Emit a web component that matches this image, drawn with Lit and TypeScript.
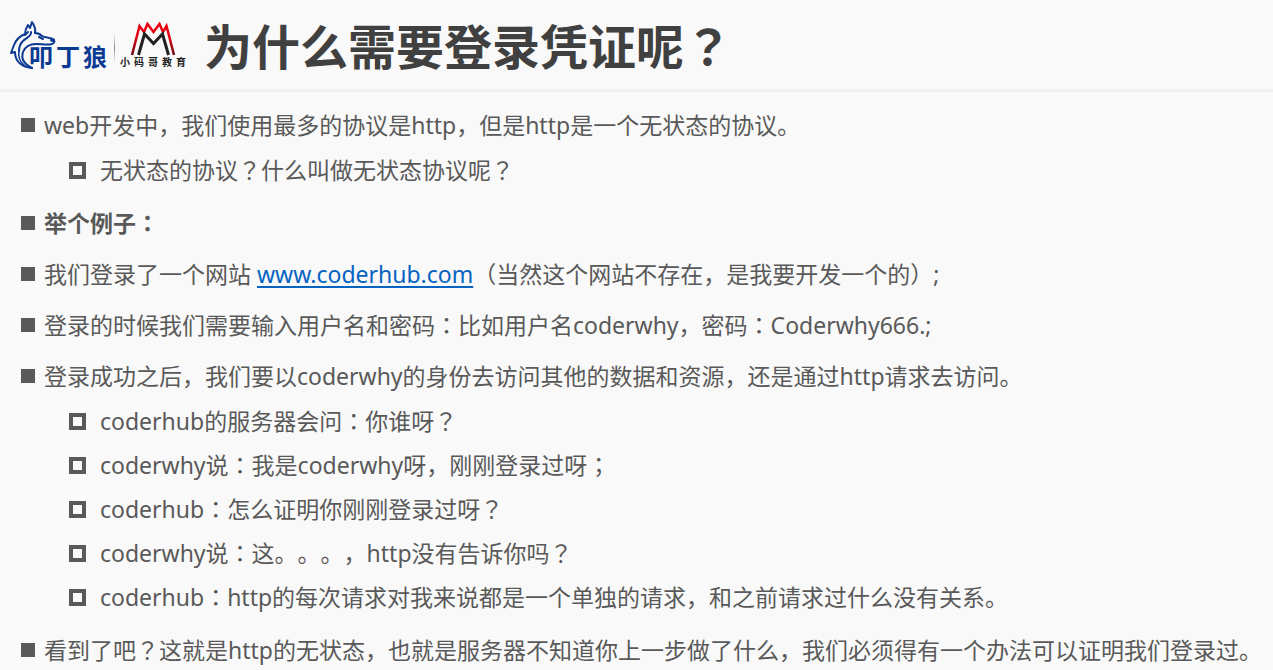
import { LitElement, html, css, svg, nothing, type TemplateResult } from "lit";
import { customElement } from "lit/decorators.js";

interface Point {
  text: string;
  link?: { label: string; href: string; rest: string };
  strong?: boolean;
  children?: string[];
}

const POINTS: Point[] = [
  {
    text: "web开发中，我们使用最多的协议是http，但是http是一个无状态的协议。",
    children: ["无状态的协议？什么叫做无状态协议呢？"],
  },
  { text: "举个例子：", strong: true },
  {
    text: "我们登录了一个网站 ",
    link: {
      label: "www.coderhub.com",
      href: "http://www.coderhub.com",
      rest: "（当然这个网站不存在，是我要开发一个的）;",
    },
  },
  { text: "登录的时候我们需要输入用户名和密码：比如用户名coderwhy，密码：Coderwhy666.;" },
  {
    text: "登录成功之后，我们要以coderwhy的身份去访问其他的数据和资源，还是通过http请求去访问。",
    children: [
      "coderhub的服务器会问：你谁呀？",
      "coderwhy说：我是coderwhy呀，刚刚登录过呀；",
      "coderhub：怎么证明你刚刚登录过呀？",
      "coderwhy说：这。。。，http没有告诉你吗？",
      "coderhub：http的每次请求对我来说都是一个单独的请求，和之前请求过什么没有关系。",
    ],
  },
  {
    text: "看到了吧？这就是http的无状态，也就是服务器不知道你上一步做了什么，我们必须得有一个办法可以证明我们登录过。",
  },
];

// Sets colons, semicolons and question marks in the middle of their square.
const centred = (text: string): (string | TemplateResult)[] =>
  text
    .split(/([：？；])/)
    .filter((part) => part !== "")
    .map((part) => (/^[：？；]$/.test(part) ? html`<span class="mark" lang="zh-TW">${part}</span>` : part));

@customElement("brand-logos")
class BrandLogos extends LitElement {
  static styles = css`
    :host {
      display: block;
      flex: none;
    }
    .logos {
      display: block;
      font-family: "Noto Sans CJK SC", sans-serif;
      font-weight: 700;
    }
    .wolf {
      fill: none;
      stroke: #0b3a92;
      stroke-width: 2;
      stroke-linejoin: round;
      stroke-linecap: round;
    }
    .wolf-name {
      font-size: 24px;
      fill: #0b3a92;
    }
    .school-name {
      font-size: 10px;
      fill: #222;
    }
  `;

  render() {
    return html`<svg class="logos" width="180" height="54" viewBox="8 18 180 54" role="img" aria-label="叩丁狼 小码哥教育">
      <defs>
        <linearGradient id="rule" x1="0" y1="0" x2="0" y2="1">
          <stop offset="0" stop-color="#aaa" stop-opacity="0" />
          <stop offset=".5" stop-color="#888" />
          <stop offset="1" stop-color="#aaa" stop-opacity="0" />
        </linearGradient>
        <linearGradient id="red" x1="0" y1="0" x2="0" y2="1">
          <stop offset=".4" stop-color="#e60012" />
          <stop offset="1" stop-color="#6a0c10" />
        </linearGradient>
      </defs>
      ${svg`
        <g class="wolf">
          <path d="M35 33C36 29 34 25 32 22L30 28 28 25C26 28 25 31 25 34C20 36 16 40 14 45L11 53 15 52C15 60 20 67 32 68" />
          <path d="M32 68C24 64 21 58 23 52C25 47 30 44 36 44C41 44 45 45 50 44.500C54 44 55 42 54 39.500C50 37 45 38 42 36C40 34 38 33 35 33" />
          <path d="M31 32C32 36 26 38 23 41C20 44 19 48 19 51M39 37 43 39M25 35 28 32" />
          <path d="M19 51C18 56 20 62 25 66" stroke-width="1.500" />
          <path d="M51 39 54 40 54 42 51 41Z" fill="#0b3a92" stroke-width="1" />
        </g>
        <text class="wolf-name" x="29 56 83" y="66">叩丁狼</text>
        <rect x="114" y="32" width="1" height="32" fill="url(#rule)" />
        <path d="M132 55 139.500 26 144 32 147.500 24 153.500 32 159.500 24 163 32 166.500 26 174 55" fill="none" stroke="url(#red)" stroke-width="2.500" />
        <path d="M138.500 55 144.500 34 153.500 43.500 162.500 34 168.500 55" fill="none" stroke="#222" stroke-width="3" />
        <text class="school-name" x="120 134 148 162 176" y="66">小码哥教育</text>
      `}
    </svg>`;
  }
}

@customElement("app-root")
class AppRoot extends LitElement {
  static styles = css`
    :host {
      display: block;
      min-height: 100vh;
      background: #f9f9f9;
      color: #595959;
      font-family: "Noto Sans", "Noto Sans CJK SC", sans-serif;
      font-size: 23px;
      line-height: 34px;
      text-spacing-trim: space-all;
    }
    .header {
      display: flex;
      align-items: center;
      gap: 16px;
      padding: 0 8px;
      height: 89px;
      border-bottom: 3px solid #f1f1f1;
    }
    .title {
      margin: 0;
      font-family: "Noto Sans CJK SC", sans-serif;
      font-size: 48px;
      line-height: 70px;
      padding-bottom: 2px;
      font-weight: 700;
      color: #404040;
    }
    .points,
    .details {
      display: flex;
      flex-direction: column;
      margin: 0;
      padding: 0;
      list-style: none;
    }
    .points {
      gap: 17px;
      padding: 16px 8px 0 21px;
    }
    .details {
      gap: 10px;
      padding: 11px 0 2px 48px;
    }
    .row {
      display: flex;
      align-items: center;
    }
    .row::before {
      content: "";
      flex: none;
      box-sizing: border-box;
      width: 14px;
      height: 14px;
      margin-right: 9px;
      background: #595959;
    }
    .details .row::before {
      width: 17px;
      height: 17px;
      margin-right: 14px;
      border: 4px solid #595959;
      background: none;
    }
    .strong {
      font-weight: 700;
    }
    .mark {
      font-family: "Noto Sans CJK TC", sans-serif;
      line-height: 1;
    }
    a {
      color: #0563c1;
      text-decoration-thickness: 2px;
      text-underline-offset: 3px;
    }
  `;

  render() {
    return html`
      <header class="header">
        <brand-logos></brand-logos>
        <h1 class="title" lang="zh-CN">${centred("为什么需要登录凭证呢？")}</h1>
      </header>
      <ul class="points" lang="zh-CN">
        ${POINTS.map(
          (point) => html`<li>
            <div class="row">
              <span class=${point.strong ? "strong" : "plain"}
                >${centred(point.text)}${point.link
                  ? html`<a href=${point.link.href}>${point.link.label}</a>${centred(point.link.rest)}`
                  : nothing}</span
              >
            </div>
            ${point.children
              ? html`<ul class="details">
                  ${point.children.map((child) => html`<li class="row"><span>${centred(child)}</span></li>`)}
                </ul>`
              : nothing}
          </li>`
        )}
      </ul>
    `;
  }
}
